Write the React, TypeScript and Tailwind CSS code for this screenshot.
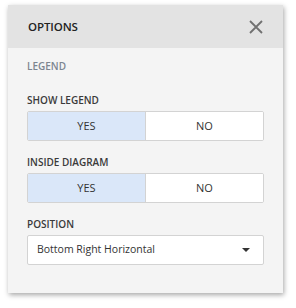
import { useState } from "react";

const font = "font-['Segoe_UI','Open_Sans',sans-serif]";

function Toggle({ value, onChange }: { value: boolean; onChange: (v: boolean) => void }) {
  return (
    <div className="flex h-[30px] border border-[#d3d3d3] rounded-[2px] overflow-hidden bg-white">
      <button
        onClick={() => onChange(true)}
        className={`flex-1 text-[11px] text-[#333] ${value ? "bg-[#dae7f9]" : "bg-white"}`}
      >
        YES
      </button>
      <div className="w-px bg-[#d3d3d3]" />
      <button
        onClick={() => onChange(false)}
        className={`flex-1 text-[11px] text-[#333] ${!value ? "bg-[#dae7f9]" : "bg-white"}`}
      >
        NO
      </button>
    </div>
  );
}

export default function App() {
  const [show, setShow] = useState(true);
  const [inside, setInside] = useState(true);

  return (
    <div className={`w-[296px] h-[308px] bg-white pt-[5px] pl-[8px] ${font}`}>
      <div className="w-[275px] h-[288px] bg-[#f4f4f4] flex flex-col shadow-[1px_2px_5px_rgba(0,0,0,0.35)]">
        <div className="h-[43px] bg-[#e3e3e3] flex items-center justify-between pl-[20px] pr-[20px]">
          <span className="text-[11.5px] font-semibold text-[#222] tracking-[-0.1px]">OPTIONS</span>
          <svg width="14" height="14" viewBox="0 0 14 14" className="text-[#707070]">
            <path d="M1 1 L13 13 M13 1 L1 13" stroke="currentColor" strokeWidth="1.8" />
          </svg>
        </div>
        <div className="flex flex-col px-[19px]">
          <div className="mt-[11px] text-[10px] font-semibold text-[#7c8590] leading-[14px]">LEGEND</div>

          <div className="mt-[20px] text-[10px] font-semibold text-[#3a3a3a] leading-[14px]">SHOW LEGEND</div>
          <div className="mt-[4px]">
            <Toggle value={show} onChange={setShow} />
          </div>

          <div className="mt-[14px] text-[10px] font-semibold text-[#3a3a3a] leading-[14px]">INSIDE DIAGRAM</div>
          <div className="mt-[4px]">
            <Toggle value={inside} onChange={setInside} />
          </div>

          <div className="mt-[14px] text-[10px] font-semibold text-[#3a3a3a] leading-[14px]">POSITION</div>
          <div className="mt-[4px] h-[30px] bg-white border border-[#d3d3d3] rounded-[2px] flex items-center justify-between pl-[9px] pr-[13px]">
            <span className="text-[10.5px] text-[#333]">Bottom Right Horizontal</span>
            <svg width="8" height="4" viewBox="0 0 8 4">
              <path d="M0 0 H8 L4 4 Z" fill="#333" />
            </svg>
          </div>
        </div>
      </div>
    </div>
  );
}
